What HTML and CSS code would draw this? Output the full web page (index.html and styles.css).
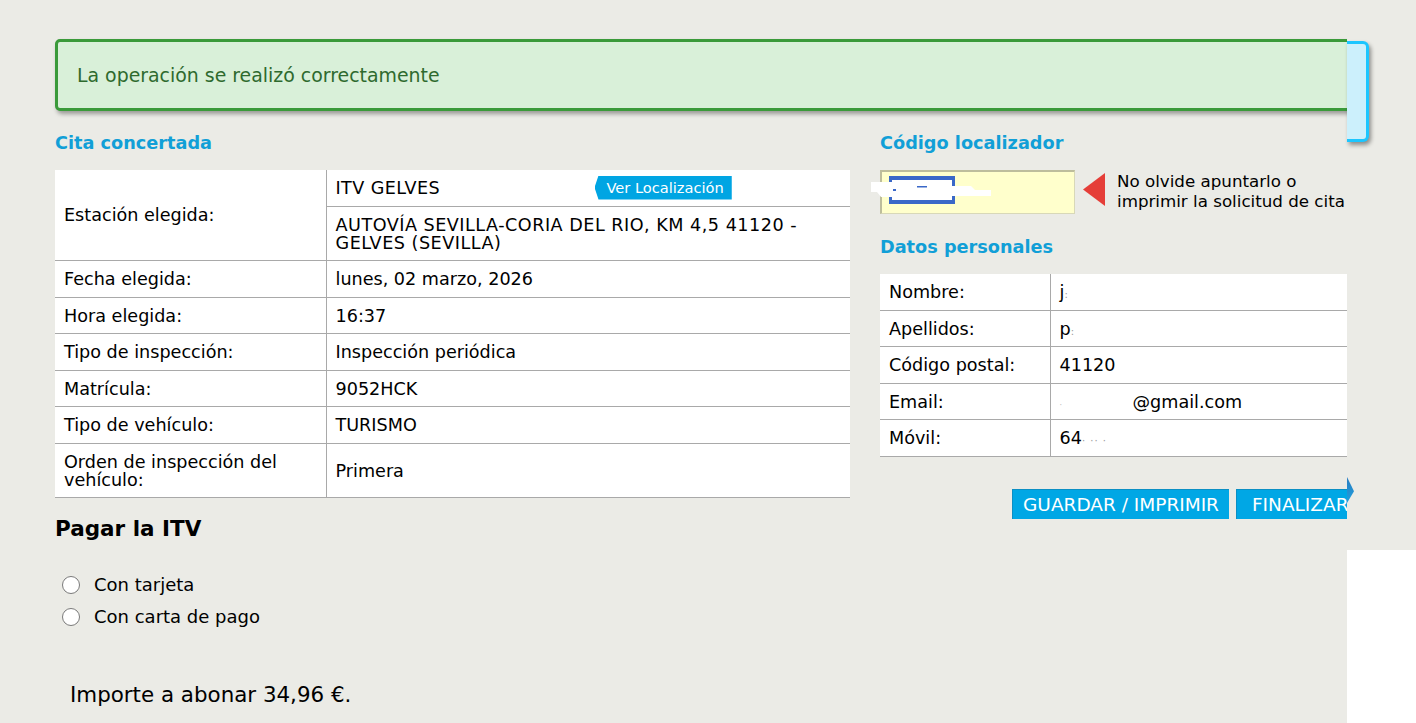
FILE: index.html
```html
<!DOCTYPE html>
<html lang="es">
<head>
<meta charset="utf-8">
<title>Cita ITV</title>
<link rel="stylesheet" href="styles.css">
</head>
<body>
<div class="page">
  <div class="main">
    <div class="alert">La operación se realizó correctamente</div>
    <div class="cols">
      <div class="left">
        <h2 class="sec">Cita concertada</h2>
        <table class="info cita">
          <tr>
            <td class="lbl" rowspan="2">Estación elegida:</td>
            <td class="val"><div class="station"><span class="st-name">ITV GELVES</span><span class="badge">Ver Localización</span></div></td>
          </tr>
          <tr><td class="val addr">AUTOVÍA SEVILLA-CORIA DEL RIO, KM 4,5 41120 - GELVES (SEVILLA)</td></tr>
          <tr><td class="lbl">Fecha elegida:</td><td class="val">lunes, 02 marzo, 2026</td></tr>
          <tr><td class="lbl">Hora elegida:</td><td class="val">16:37</td></tr>
          <tr><td class="lbl">Tipo de inspección:</td><td class="val">Inspección periódica</td></tr>
          <tr><td class="lbl">Matrícula:</td><td class="val">9052HCK</td></tr>
          <tr><td class="lbl">Tipo de vehículo:</td><td class="val">TURISMO</td></tr>
          <tr><td class="lbl">Orden de inspección del vehículo:</td><td class="val">Primera</td></tr>
        </table>
        <h3 class="pay-title">Pagar la ITV</h3>
        <div class="radios">
          <label class="radio"><input type="radio" name="pago"><span>Con tarjeta</span></label>
          <label class="radio"><input type="radio" name="pago"><span>Con carta de pago</span></label>
        </div>
        <p class="amount">Importe a abonar 34,96 €.</p>
      </div>
      <div class="right">
        <h2 class="sec">Código localizador</h2>
        <div class="loc-row">
          <div class="loc-box">
            <svg class="redact" width="120" height="30" viewBox="0 0 120 30">
              <rect x="18" y="0" width="66" height="28" fill="#3a68c8"/>
              <rect x="21" y="4" width="60" height="20" fill="#fff"/>
              <path d="M0 6 H58 L60 10 H100 L104 14 H120 V20 H80 L76 24 H40 L36 21 H10 L6 16 H0 Z" fill="#fff"/>
              <rect x="46" y="10" width="10" height="1.5" fill="#3a68c8"/>
              <rect x="22" y="13" width="3" height="2" fill="#3a68c8"/>
            </svg>
          </div>
          <span class="tri"></span>
          <p class="loc-note">No olvide apuntarlo o<br>imprimir la solicitud de cita</p>
        </div>
        <h2 class="sec sec2">Datos personales</h2>
        <table class="info personal">
          <tr><td class="lbl">Nombre:</td><td class="val">j<span class="blur">:</span></td></tr>
          <tr><td class="lbl">Apellidos:</td><td class="val">p<span class="blur">:</span></td></tr>
          <tr><td class="lbl">Código postal:</td><td class="val">41120</td></tr>
          <tr><td class="lbl lbl-email">Email:</td><td class="val val-email"><span class="blur-gap">·</span>@gmail.com</td></tr>
          <tr><td class="lbl">Móvil:</td><td class="val">64<span class="blur">· ·· ·</span></td></tr>
        </table>
        <div class="actions">
          <button class="btn">GUARDAR / IMPRIMIR</button>
          <button class="btn next">FINALIZAR</button>
        </div>
      </div>
    </div>
  </div>
  <div class="strip">
    <div class="strip-top">
      <div class="ghost-alert"></div>
      <div class="arrow"></div>
    </div>
  </div>
</div>
</body>
</html>
```

FILE: styles.css
```css
* { box-sizing: border-box; }
html, body { margin: 0; padding: 0; background: #ffffff; }
body {
  font-family: "DejaVu Sans", Verdana, sans-serif;
  color: #000;
  width: 1416px;
  height: 723px;
  overflow: hidden;
}
.page {
  display: flex;
  height: 723px;
}
.main {
  width: 1347px;
  flex: 0 0 1347px;
  height: 723px;
  background: #ebebe6;
  overflow: hidden;
  padding: 39px 0 0 55px;
}
.alert {
  width: 1313px;
  height: 72px;
  background: #d9f0d9;
  border: 3px solid #3a9a3a;
  border-radius: 5px;
  box-shadow: 2px 3px 4px rgba(0,0,0,0.35);
  color: #2e6a2e;
  font-size: 18.9px;
  line-height: 22px;
  padding: 22px 0 0 19px;
}
.cols {
  display: grid;
  grid-template-columns: 795px 490px;
  column-gap: 30px;
}
.sec {
  margin: 21px 0 16px;
  font-size: 17.7px;
  line-height: 22px;
  font-weight: bold;
  color: #119fd7;
}
.sec2 { margin: 22px 0 16px; }
.info {
  border-collapse: collapse;
  background: #fff;
  font-size: 17.6px;
  line-height: 18px;
}
.cita { width: 795px; }
.personal { width: 490px; }
.info td {
  border-bottom: 1px solid #a9a9a9;
  padding: 9px 9px 8.5px;
  vertical-align: middle;
  text-align: left;
}
.info td.lbl { border-right: 1px solid #a9a9a9; }
.cita td.lbl { width: 271px; padding-right: 30px; }
.cita td.val { padding-left: 9px; }
.cita td.addr { letter-spacing: 0.5px; }
.personal td.lbl { width: 170px; }
.personal td.val { padding-left: 9px; }
.station {
  display: flex;
  align-items: center;
}
.st-name { width: 259px; letter-spacing: 0.4px; }
.badge {
  display: inline-block;
  background: #00a5e3;
  color: #fff;
  font-size: 14.6px;
  line-height: 24px;
  height: 24px;
  padding: 0 8px 0 12px;
  margin: -4px 0 -3px;
  clip-path: polygon(4px 0, 100% 0, 100% 100%, 4px 100%, 0 50%);
}
.blur { color: #9a9a9a; font-size: 10px; line-height: 0; letter-spacing: 1px; }
.blur-gap { display: inline-block; width: 73px; color: #bbb; font-size: 8px; line-height: 0; }
.pay-title {
  margin: 18px 0 0;
  font-size: 21.5px;
  line-height: 26px;
  font-weight: bold;
}
.radios {
  margin-top: 33px;
  display: flex;
  flex-direction: column;
  gap: 12px;
  padding-left: 7px;
}
.radio {
  display: flex;
  align-items: center;
  gap: 14px;
  font-size: 18px;
  line-height: 20px;
}
.radio input {
  appearance: none;
  -webkit-appearance: none;
  margin: 0;
  width: 18px;
  height: 18px;
  border-radius: 50%;
  border: 1.5px solid #7a7a7a;
  background: #fff;
}
.amount {
  margin: 56px 0 0 15px;
  font-size: 21.4px;
  line-height: 24px;
}
.loc-row {
  display: flex;
  align-items: flex-start;
}
.loc-box {
  width: 195px;
  height: 44px;
  background: #ffffcc;
  border: 1px solid #d8d8b8;
  border-top: 2px solid #bdbd9c;
  border-left: 2px solid #bdbd9c;
  padding: 4px 0 0 0;
}
.redact { display: block; margin-left: -11px; overflow: visible; }
.tri {
  width: 22px;
  height: 33px;
  margin: 3px 0 0 8px;
  background: #e53e38;
  clip-path: polygon(100% 0, 100% 100%, 0 50%);
}
.loc-note {
  margin: 1px 0 0 12px;
  font-size: 16.7px;
  line-height: 20px;
  white-space: nowrap;
}
.actions {
  margin: 32px 0 0 132px;
  display: flex;
  gap: 7px;
}
.btn {
  font-family: "DejaVu Sans", Verdana, sans-serif;
  font-size: 18.5px;
  line-height: 29px;
  height: 30px;
  padding: 0 10px;
  border: 0;
  border-top: 1px solid #0b8fc4;
  border-left: 1px solid #0b8fc4;
  background: #00a7e5;
  color: #fff;
  white-space: nowrap;
}
.btn.next { padding: 0 15px; width: 140px; text-align: left; }
.strip {
  flex: 1 1 auto;
  background: #fff;
}
.strip-top {
  height: 550px;
  background: #ebebe6;
  padding-top: 41px;
}
.ghost-alert {
  width: 22px;
  height: 101px;
  background: #ccf0fc;
  border: 3px solid #1cc6ff;
  border-left: 0;
  border-radius: 0 6px 6px 0;
  box-shadow: 2px 3px 4px rgba(0,0,0,0.4);
}
.arrow {
  width: 7px;
  height: 26px;
  margin-top: 335px;
  background: linear-gradient(#2a7cc0, #1da0df);
  clip-path: polygon(0 0, 100% 55%, 0 100%);
}
```
